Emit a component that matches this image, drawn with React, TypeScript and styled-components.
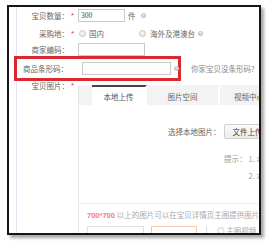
import React from 'react';
import styled, { createGlobalStyle } from 'styled-components';

const GlobalStyle = createGlobalStyle`
  html, body {
    margin: 0;
    padding: 0;
    background: #fff;
  }
  body {
    font-family: "Noto Sans CJK SC", "Liberation Sans", sans-serif;
  }
`;

const Page = styled.div`
  width: 268px;
  height: 244px;
  padding: 5px 0 0 7px;
  box-sizing: border-box;
  overflow: hidden;
  background: #fff;
`;

// the black frame of the pasted screenshot, with its soft shadow
const Frame = styled.div`
  width: 254px;
  height: 230px;
  box-sizing: border-box;
  border: 2px solid #161616;
  box-shadow: 3px 3px 3px rgba(0, 0, 0, 0.35);
  overflow: hidden;
  display: flex;
  flex-direction: column;
  background-color: #fff;
  background-image: linear-gradient(to right, transparent 7px, #dce5f0 7px, #dce5f0 8px, transparent 8px);
  font-size: 7.5px;
  color: #666;
  white-space: nowrap;
`;

const Row = styled.div<{ $top: number; $h: number }>`
  display: flex;
  align-items: center;
  flex: none;
  height: ${(p) => p.$h}px;
  margin-top: ${(p) => p.$top}px;
`;

const Label = styled.div<{ $w?: number }>`
  width: ${(p) => p.$w ?? 60}px;
  flex: none;
  text-align: right;
  line-height: 10px;
`;

const Star = styled.span`
  width: 9px;
  flex: none;
  box-sizing: border-box;
  padding-left: 2px;
  color: #e2393c;
  font-family: "Liberation Sans", sans-serif;
  font-size: 8px;
  line-height: 10px;
`;

const Input = styled.input<{ $w: number; $ml?: number }>`
  width: ${(p) => p.$w}px;
  height: 13px;
  margin: 0 0 0 ${(p) => p.$ml ?? 0}px;
  padding: 0 2px;
  box-sizing: border-box;
  border: 1px solid #c9c9c9;
  background: #fff;
  color: #444;
  font-family: "Liberation Serif", serif;
  font-size: 7.5px;
  outline: none;
`;

const Text = styled.span<{ $ml?: number; $color?: string }>`
  margin-left: ${(p) => p.$ml ?? 0}px;
  color: ${(p) => p.$color ?? '#666'};
  line-height: 10px;
`;

const Radio = styled.span<{ $ml?: number }>`
  width: 5px;
  height: 5px;
  flex: none;
  margin-left: ${(p) => p.$ml ?? 0}px;
  border-radius: 50%;
  border: 1px solid #c4c4c4;
  background: radial-gradient(circle at 40% 40%, #fbfbfb 0, #e6e6e6 70%);
`;

const Help = styled.span<{ $ml?: number }>`
  width: 5px;
  height: 5px;
  flex: none;
  margin-left: ${(p) => p.$ml ?? 0}px;
  border-radius: 50%;
  background: #c6c6c6;
  color: #fff;
  font-family: "Liberation Sans", sans-serif;
  font-size: 4px;
  line-height: 5px;
  text-align: center;
  font-weight: bold;
`;

// red annotation drawn round the barcode row
const Highlight = styled.div`
  width: 167px;
  height: 25px;
  margin-left: 5px;
  box-sizing: border-box;
  border: 3px solid #db2a2f;
  display: flex;
  align-items: center;
  flex: none;
`;

const PicRow = styled.div`
  display: flex;
  align-items: flex-start;
  flex: 1;
  min-height: 0;
`;

const Panel = styled.div`
  flex: 1;
  align-self: stretch;
  margin-top: 4px;
  border-left: 1px solid #e6e6e6;
  display: flex;
  flex-direction: column;
  min-width: 0;
`;

const TabBar = styled.div`
  height: 20px;
  flex: none;
  display: flex;
  padding-left: 13px;
  background: #f3f3f3;
`;

const Tab = styled.div<{ $active?: boolean; $w: number }>`
  width: ${(p) => p.$w}px;
  flex: none;
  box-sizing: border-box;
  display: flex;
  align-items: center;
  justify-content: center;
  border-top: 2px solid ${(p) => (p.$active ? '#444' : 'transparent')};
  border-right: 2px solid ${(p) => (p.$active ? 'transparent' : '#fff')};
  background: ${(p) => (p.$active ? '#fff' : '#f3f3f3')};
  color: ${(p) => (p.$active ? '#555' : '#666')};
`;

const Body = styled.div`
  height: 98px;
  flex: none;
  display: flex;
  flex-direction: column;
`;

const UploadRow = styled.div`
  display: flex;
  align-items: center;
  height: 15px;
  margin-top: 19px;
  padding-left: 89px;
`;

const FileButton = styled.div`
  height: 15px;
  margin-left: 3px;
  padding: 0 8px;
  box-sizing: border-box;
  border: 1px solid #cfcfcf;
  border-radius: 2px;
  background: linear-gradient(#fbfbfb, #ececec);
  color: #444;
  line-height: 13px;
`;

const Tips = styled.div`
  display: flex;
  margin-top: 11px;
  padding-left: 145px;
  color: #9a9a9a;
  line-height: 17px;
`;

const TipList = styled.ol`
  margin: 0 0 0 2px;
  padding: 0;
  list-style: none;
`;

const Footer = styled.div`
  flex: 1;
  border-top: 1px solid #ececec;
  padding: 6px 0 0 8px;
  display: flex;
  flex-direction: column;
`;

const Note = styled.div`
  line-height: 10px;
  color: #aaa;
`;

const Size = styled.span`
  color: #f0826a;
  font-family: "Liberation Sans", sans-serif;
  font-weight: bold;
`;

const Thumbs = styled.div`
  display: flex;
  align-items: flex-start;
  margin-top: 5px;
`;

const Thumb = styled.div<{ $w: number; $ml?: number; $color: string }>`
  width: ${(p) => p.$w}px;
  height: 14px;
  flex: none;
  margin-left: ${(p) => p.$ml ?? 0}px;
  box-sizing: border-box;
  border: 1px solid ${(p) => p.$color};
`;

const Divider = styled.div`
  width: 1px;
  height: 14px;
  margin-left: 9px;
  background: #dcdcdc;
`;

export default function App() {
  return (
    <Page>
      <GlobalStyle />
      <Frame>
        <Row $top={2} $h={13}>
          <Label>宝贝数量：</Label>
          <Star>*</Star>
          <Input $w={47} defaultValue="300" readOnly />
          <Text $ml={3}>件</Text>
          <Help $ml={5}>?</Help>
        </Row>
        <Row $top={5} $h={13}>
          <Label>采购地：</Label>
          <Star>*</Star>
          <Radio $ml={1} />
          <Text $ml={3}>国内</Text>
          <Radio $ml={35} />
          <Text $ml={4}>海外及港澳台</Text>
          <Help $ml={3}>?</Help>
        </Row>
        <Row $top={3} $h={13}>
          <Label>商家编码：</Label>
          <Star />
          <Input $w={67} readOnly />
        </Row>
        <Row $top={0} $h={25}>
          <Highlight>
            <Label $w={51}>商品条形码：</Label>
            <Input $w={89} $ml={14} readOnly />
            <Help $ml={3}>?</Help>
          </Highlight>
          <Text $ml={10} $color="#8a8a8a">你家宝贝没条形码?</Text>
        </Row>
        <PicRow>
          <Label>宝贝图片：</Label>
          <Star>*</Star>
          <Panel>
            <TabBar>
              <Tab $active $w={55}>本地上传</Tab>
              <Tab $w={73}>图片空间</Tab>
              <Tab $w={60}>视频中心</Tab>
            </TabBar>
            <Body>
              <UploadRow>
                <Text>选择本地图片：</Text>
                <FileButton>文件上传</FileButton>
              </UploadRow>
              <Tips>
                <span>提示：</span>
                <TipList>
                  <li>1. 本地上传图片大小不能超过3M。</li>
                  <li>2. 本类目下您最多可以上传5张图片。</li>
                </TipList>
              </Tips>
            </Body>
            <Footer>
              <Note>
                <Size>700*700</Size> 以上的图片可以在宝贝详情页主图提供图片放大功能
              </Note>
              <Thumbs>
                <Thumb $w={57} $color="#e2e2e2" />
                <Thumb $w={46} $ml={7} $color="#f5c9b0" />
                <Divider />
                <Text $ml={10} $color="#aaa">◎ 主图视频</Text>
              </Thumbs>
            </Footer>
          </Panel>
        </PicRow>
      </Frame>
    </Page>
  );
}
